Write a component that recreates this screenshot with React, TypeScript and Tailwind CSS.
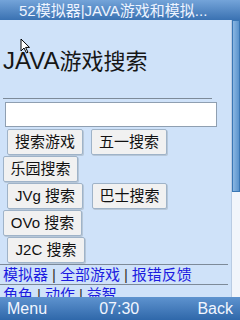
import React from "react";

const font = { fontFamily: '"Liberation Sans", "Noto Sans CJK SC", sans-serif' };

function Btn({ label, w }: { label: string; w: string }) {
  return (
    <div
      className={`flex h-[26px] ${w} items-center justify-center rounded-[2px] border border-[#9fb3c8] bg-[#f1f1f1] text-[15px] text-[#111] shadow-[1px_1px_0_#b7c7d8]`}
    >
      {label}
    </div>
  );
}

function Cursor() {
  return (
    <svg
      className="absolute left-[20px] top-[18px]"
      width="11"
      height="16"
      viewBox="0 0 11 16"
    >
      <path
        d="M1 1 L1 13 L4 10 L6.5 15 L8 14.3 L5.6 9.4 L9.5 9.4 Z"
        fill="#fff"
        stroke="#000"
        strokeWidth="1"
        strokeLinejoin="round"
      />
    </svg>
  );
}

export default function App() {
  return (
    <div className="flex h-[320px] w-[240px] flex-col overflow-hidden bg-[#cfe2f9]" style={font}>
      <div className="flex h-[20px] shrink-0 items-center bg-gradient-to-b from-[#74a4d9] to-[#3a72b2] pl-[19px] text-[15px] leading-none text-[#eef4ff]">
        52模拟器|JAVA游戏和模拟...
      </div>

      <div className="relative flex min-h-0 flex-1 overflow-hidden">
        <div className="w-[231px] shrink-0">
          <Cursor />
          <div className="pl-[3px] pt-[29px] text-[22px] leading-[24px] text-[#161616]">
            <span className="text-[24px]">JAVA</span>游戏搜索
          </div>
          <div className="ml-[3px] mt-[24px] h-px w-[209px] bg-[#7d8a99]" />
          <div className="ml-[5px] mt-[3px] h-[25px] w-[212px] border border-[#8f9fb1] bg-white" />

          <div className="mt-[2px] flex flex-col gap-px">
            <div className="flex gap-[8px] pl-[7px]">
              <Btn label="搜索游戏" w="w-[76px]" />
              <Btn label="五一搜索" w="w-[76px]" />
            </div>
            <div className="flex pl-[3px]">
              <Btn label="乐园搜索" w="w-[75px]" />
            </div>
            <div className="flex gap-[9px] pl-[7px]">
              <Btn label="JVg 搜索" w="w-[76px]" />
              <Btn label="巴士搜索" w="w-[75px]" />
            </div>
            <div className="flex pl-[3px]">
              <Btn label="OVo 搜索" w="w-[79px]" />
            </div>
            <div className="flex pl-[7px]">
              <Btn label="J2C 搜索" w="w-[78px]" />
            </div>
          </div>

          <div className="mt-px h-px w-[228px] bg-[#7d8a99]" />
          <div className="flex h-[19px] items-center pl-[3px] text-[15px] leading-none text-[#1c1ce0]">
            模拟器<span className="px-[4px] text-[#333]">|</span>全部游戏
            <span className="px-[4px] text-[#333]">|</span>报错反馈
          </div>
          <div className="h-px w-[228px] bg-[#7d8a99]" />
          <div className="flex h-[19px] items-center pl-[3px] text-[15px] leading-none text-[#1c1ce0]">
            角色<span className="px-[4px] text-[#333]">|</span>动作
            <span className="px-[4px] text-[#333]">|</span>益智
          </div>
        </div>

        <div className="flex w-[9px] shrink-0 flex-col border-l border-[#b9cbe3] bg-[#f2f5fb]">
          <div className="h-[172px] shrink-0 border border-[#3b77b5] bg-gradient-to-r from-[#8ab6e2] to-[#5b93cc]" />
        </div>
      </div>

      <div className="flex h-[23px] shrink-0 items-center justify-between bg-gradient-to-b from-[#5e93cf] to-[#2f68aa] px-[7px] text-[16px] leading-none text-[#f2f6ff]">
        <span>Menu</span>
        <span className="-ml-[6px]">07:30</span>
        <span>Back</span>
      </div>
    </div>
  );
}
